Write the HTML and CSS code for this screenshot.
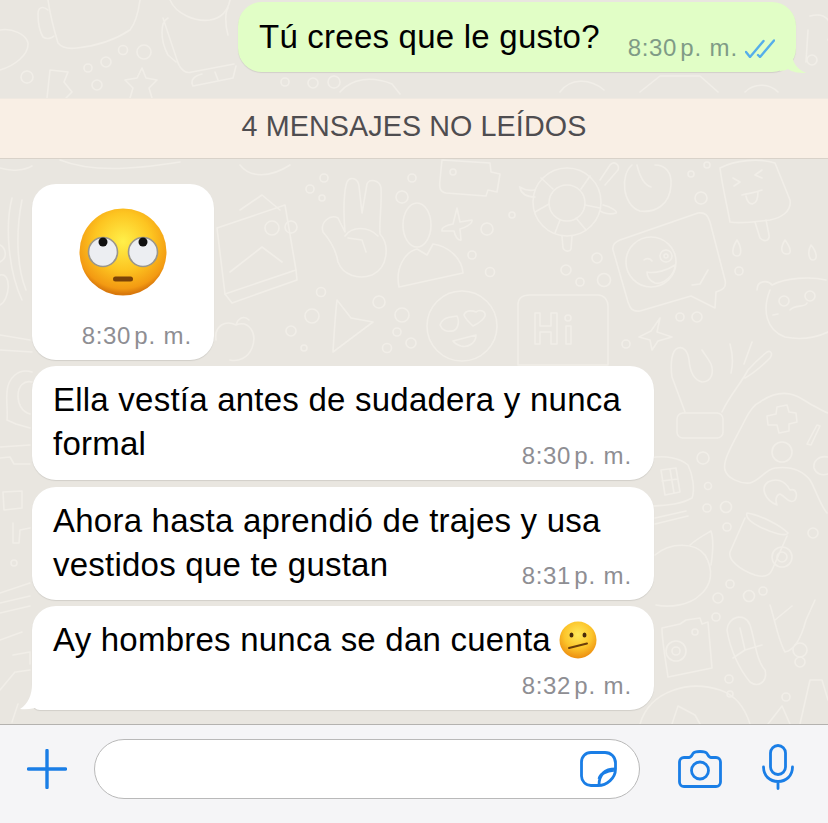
FILE: index.html
```html
<!DOCTYPE html>
<html lang="es">
<head>
    <meta charset="UTF-8">
    <meta name="viewport" content="width=device-width, initial-scale=1.0">
    <title>Chat</title>
    <link rel="stylesheet" href="styles.css">
</head>
<body>
    <div class="chat">
        <!-- Wallpaper doodles -->
        <svg class="wallpaper" viewBox="0 0 828 724" width="828" height="724" aria-hidden="true">
            <g fill="none" stroke="#f1eee8" stroke-width="1.6" stroke-linecap="round" stroke-linejoin="round">
                <!-- small bubbles -->
                <circle cx="324" cy="178" r="4"/><circle cx="310" cy="189" r="4"/><circle cx="322" cy="198" r="3"/>
                <circle cx="402" cy="197" r="6"/><circle cx="412" cy="178" r="4"/><circle cx="487" cy="229" r="6"/>
                <circle cx="512" cy="215" r="3"/><circle cx="472" cy="255" r="4"/><circle cx="490" cy="272" r="4.5"/>
                <circle cx="597" cy="258" r="5"/><circle cx="566" cy="270" r="5"/><circle cx="580" cy="282" r="4"/>
                <circle cx="604" cy="280" r="6.5"/><circle cx="321" cy="292" r="4.5"/><circle cx="379" cy="302" r="6"/>
                <circle cx="312" cy="316" r="7"/><circle cx="402" cy="315" r="7"/><circle cx="397" cy="332" r="4"/>
                <circle cx="411" cy="343" r="5"/><circle cx="387" cy="348" r="4.5"/><circle cx="304" cy="348" r="3"/>
                <circle cx="701" cy="198" r="6"/><circle cx="691" cy="174" r="3"/><circle cx="707" cy="165" r="3"/>
                <circle cx="739" cy="271" r="4"/><circle cx="680" cy="317" r="4"/><circle cx="697" cy="317" r="5"/>
                <circle cx="626" cy="344" r="4"/><circle cx="291" cy="227" r="6"/>
                <circle cx="703" cy="458" r="6"/><circle cx="708" cy="486" r="3.5"/><circle cx="707" cy="508" r="4"/>
                <circle cx="726" cy="507" r="5.5"/><circle cx="727" cy="527" r="4"/><circle cx="813" cy="533" r="5"/>
                <circle cx="730" cy="584" r="4"/><circle cx="718" cy="598" r="5"/><circle cx="749" cy="596" r="5.5"/>
                <circle cx="763" cy="591" r="4"/><circle cx="716" cy="617" r="4"/>
                <circle cx="800" cy="650" r="7"/><circle cx="800" cy="662" r="5"/><circle cx="729" cy="679" r="4"/>
                <circle cx="786" cy="697" r="4"/><circle cx="730" cy="694" r="3"/><circle cx="14" cy="563" r="3"/>
                <circle cx="27" cy="77" r="6"/><circle cx="88" cy="68" r="4"/><circle cx="106" cy="62" r="5"/>
                <circle cx="97" cy="85" r="5"/><circle cx="123" cy="50" r="4.5"/><circle cx="144" cy="52" r="7"/>
                <circle cx="285" cy="82" r="4"/><circle cx="313" cy="83" r="5"/><circle cx="334" cy="82" r="6"/>
                <circle cx="812" cy="60" r="5"/>

                <!-- peace hand -->
                <path d="M345 232 C343 210 344 190 347 182 C350 176 358 178 359 186 L362 213 L367 184 C369 178 380 180 381 188 C382 205 379 222 380 234 C390 245 388 268 372 275 C358 280 343 275 338 262 C336 250 330 240 323 232 C320 222 330 214 338 218 L345 232"/>
                <path d="M345 236 C352 226 368 226 378 236 M348 238 L362 240 L366 252"/>

                <!-- person -->
                <ellipse cx="417" cy="225" rx="14" ry="22"/>
                <path d="M399 287 C395 268 405 252 417 249 L427 255 L433 244 C448 246 462 258 463 273 Z"/>
                <path d="M457 208 L460 222 L472 220 C473 224 464 228 460 229 L461 240 C458 241 455 236 454 231 L442 231 C441 227 448 225 453 224 Z"/>

                <!-- camera top, turtle -->
                <path d="M442 160 L490 163 L491 172 L500 174 L497 192 L488 190 L486 196 L446 193 C440 192 439 188 440 180 Z"/>
                <circle cx="453" cy="172" r="3"/>
                <circle cx="567" cy="202" r="34"/><circle cx="567" cy="203" r="18"/>
                <path d="M553 189 L541 178 M581 189 L590 176 M585 205 L600 208 M576 218 L586 230 M560 220 L555 233 M549 204 L535 212"/>
                <path d="M535 190 C522 192 518 184 520 188 C522 196 530 197 535 197 M562 236 L563 248 C565 252 570 252 571 249 L572 236 M603 205 C612 207 618 212 616 213 C610 215 603 213 600 211 M600 180 L610 165 C614 160 620 165 618 170 L605 185"/>

                <!-- apple -->
                <path d="M632 165 C620 175 622 205 640 211 C655 213 670 205 671 185 C672 172 665 165 655 165 M637 165 C640 178 645 185 651 187"/>

                <!-- popsicle -->
                <path d="M720 168 C735 160 760 158 775 163 L790 200 C792 212 780 218 770 220 C755 222 740 224 730 222 C727 205 722 185 720 168 Z"/>
                <path d="M755 222 L760 238 C765 243 770 240 769 235 L766 220 M733 178 L740 182 L734 186 M762 170 L755 175 L762 178 M742 195 C750 193 755 193 762 190 M746 196 C748 208 758 206 758 192"/>

                <!-- wink emoji speech square -->
                <path d="M620 240 L698 213 C706 212 708 216 710 222 L725 280 C727 288 722 290 716 292 L715 308 L691 296 L640 311 C632 312 630 308 628 302 L613 250 C612 245 615 242 620 240 Z"/>
                <circle cx="651" cy="262" r="25"/><circle cx="666" cy="256" r="6"/><circle cx="666" cy="256" r="2"/>
                <path d="M644 260 C646 258 650 258 652 261 M647 272 C655 274 668 270 675 265 C675 276 662 285 655 283 C650 281 647 277 647 272 M692 285 L700 284 L708 270"/>

                <!-- arrow, heart eyes, Hi -->
                <path d="M337 300 L351 318 L373 322 L333 352 C334 335 335 318 337 300 Z"/>
                <circle cx="462" cy="326" r="35"/>
                <path d="M440 325 C443 316 452 317 457 316 C460 322 458 332 450 331 C447 332 442 330 440 325 Z M464 315 C466 309 474 311 476 312 C480 309 486 311 485 316 C483 321 477 324 473 326 C470 323 466 320 464 315 Z M453 341 L476 335 C476 343 468 348 461 346 C458 345 455 344 453 341 Z"/>
                <path d="M518 305 C518 298 522 295 530 295 L598 295 C604 295 608 300 608 306 L608 365 L518 365 Z"/>
                <path d="M535 313 V344 H540 V332 H551 V344 H557 V313 H551 V326 H540 V313 Z M566 326 H571 V344 H566 Z"/>
                <circle cx="568" cy="318" r="3"/>

                <!-- star low -->
                <path d="M660 318 L657 332 L672 337 L658 341 L652 350 L650 340 L639 337 L651 331 Z"/>

                <!-- ok hand -->
                <rect x="677" y="413" width="46" height="25" rx="6"/>
                <path d="M685 412 L672 377 C670 362 672 350 678 348 C684 346 688 352 689 360 C690 372 694 380 702 382 C712 382 714 372 711 364 C708 358 705 355 702 350 M722 412 C730 395 740 385 748 370 C755 362 762 356 767 352 C771 350 773 354 770 358 C762 366 752 374 745 378 M730 344 C733 355 733 365 731 373 M752 342 L744 364"/>

                <!-- gamepad -->
                <path d="M725 470 C722 460 735 440 745 420 C750 410 755 404 760 402 C770 395 780 392 790 394 C800 396 806 402 812 405 C818 408 824 412 828 413"/>
                <path d="M725 470 C727 478 740 484 750 483 C760 480 765 470 775 468 C790 466 802 470 810 480 C816 490 820 505 827 513"/>
                <path d="M777 407 L787 405 L789 412 L796 413 L797 422 L789 424 L789 431 L779 433 L777 425 L768 425 L767 416 L776 414 Z"/>
                <circle cx="782" cy="452" r="10"/>
                <path d="M817 425 L807 444 L811 445 L820 426 Z"/>
                <path d="M828 457 C818 455 813 462 814 468 C816 474 822 476 828 474"/>
                <path d="M777 505 C765 500 760 488 768 482 C776 478 785 480 790 490 C796 488 798 495 795 500 C790 505 785 496 780 494 C776 495 775 500 777 505 Z"/>

                <!-- mug -->
                <path d="M747 513 C760 515 780 525 788 533 C786 537 772 533 760 527 C752 523 745 518 747 513 Z"/>
                <path d="M745 518 L730 552 C728 560 740 570 755 575 C765 578 770 575 772 570 L787 536"/>
                <circle cx="782" cy="557" r="10"/><circle cx="782" cy="557" r="5"/>

                <!-- alarm clock -->
                <path d="M650 458 C665 455 680 458 688 465 C693 475 695 490 692 498 C680 505 665 505 654 506"/>
                <path d="M661 470 L676 468 L680 492 L665 495 Z M662 481 L678 479 M670 469 L674 493"/>
                <path d="M655 518 L686 511 M655 524 L688 516"/>

                <!-- shell -->
                <path d="M655 555 C670 542 695 542 705 555 C714 570 712 585 700 595 C690 605 670 608 656 605"/>
                <path d="M690 545 C698 538 706 534 711 531 C714 540 713 552 711 565"/>

                <!-- camera and flip flops, bottom right -->
                <path d="M662 628 L680 624 L686 620 L700 618 L702 624 L708 622 L712 668 L668 677 C664 650 662 640 662 628 Z"/>
                <circle cx="676" cy="651" r="10"/><circle cx="676" cy="651" r="4"/>
                <circle cx="695" cy="632" r="3"/>
                <path d="M727 630 C728 616 745 612 750 625 C755 640 756 660 765 670 C768 682 758 688 750 682 C740 670 730 650 727 630 Z M740 628 L745 650 L733 658 M745 650 L762 645"/>
                <path d="M770 605 C775 620 778 640 785 652 C795 650 802 635 806 620 L815 600 M775 620 L792 606"/>

                <!-- drops -->
                <path d="M737 240 C732 248 731 256 737 256 C742 256 742 248 737 240 Z M785 240 C780 248 781 254 787 254 C792 254 791 248 785 240 Z M811 245 C807 252 809 260 813 260 C818 260 817 252 811 245 Z"/>

                <!-- bear -->
                <path d="M757 290 C757 280 768 280 772 285 C785 278 810 276 826 280 M770 290 C762 310 766 330 785 337 C800 340 815 338 828 332"/>
                <circle cx="784" cy="301" r="5"/><circle cx="810" cy="296" r="5"/>
                <path d="M790 310 C795 304 805 308 807 303 M773 315 L778 314"/>

                <!-- photos, left -->
                <path d="M217 228 L285 205 L296 270 L225 294 Z"/>
                <path d="M225 294 L232 303 L297 280 L296 270 M230 272 L262 247 L282 262 M240 210 L262 195 L280 210"/>
                <circle cx="272" cy="228" r="7"/>
                <path d="M216 340 C214 325 226 320 236 325 C248 320 258 332 252 348 C248 358 238 362 230 360 M236 325 C238 318 244 315 249 320"/>
                <circle cx="291" cy="331" r="5"/>

                <!-- left edge doodles -->
                <path d="M12 198 C5 225 8 270 22 300 M22 200 C16 230 16 265 26 290 M0 245 C6 248 8 258 0 262 M0 275 C12 272 10 300 0 305"/>
                <path d="M0 335 L30 340 M0 350 L32 352 M0 168 C12 172 25 170 32 166"/>
                <path d="M32 372 C18 368 8 378 7 392 C6 402 8 412 7 420 L16 424 L30 428 M32 382 C24 380 18 386 18 396 C18 404 22 412 30 414"/>
                <path d="M0 447 L30 445 M0 458 L10 457 L14 464 L30 464"/>
                <path d="M3 492 L22 491 L22 508 L4 510 Z M13 523 L13 543 L19 543 L20 530 L30 528"/>
                <path d="M0 593 L30 583 M0 603 L30 596 M0 613 L30 606"/>
                <path d="M0 640 L22 632 M13 655 L30 652 L30 664 M16 672 L30 670"/>
                <path d="M0 690 L15 672 M12 722 L18 704"/>

                <!-- top left -->
                <path d="M48 0 C50 14 54 30 58 43 C62 48 70 49 77 48 C95 46 115 40 130 30 C134 25 138 15 140 0"/>
                <path d="M48 10 C42 5 38 8 38 14 C38 24 40 32 43 37 C47 40 52 38 54 36"/>
                <path d="M0 30 C12 28 26 34 28 43 C29 55 14 66 0 70"/>
                <path d="M50 70 L68 72 L64 82 L72 92 L66 98 M50 70 L47 98"/>
                <path d="M142 68 L146 78 L157 80 L149 88 L152 98 M142 68 L137 78 L125 80 L133 88 L130 98"/>
                <path d="M170 0 C176 14 195 22 210 20 C222 18 228 10 230 0"/>
                <path d="M168 18 C160 22 160 40 168 55 L176 62 M163 18 L177 60 C180 70 186 74 192 72 L234 64"/>
                <path d="M193 86 L233 78 L236 66 M193 86 C190 80 194 76 202 74 M215 72 L218 80"/>
                <path d="M228 8 C225 12 225 25 228 35"/>

                <!-- top middle and right -->
                <path d="M60 160 C90 172 130 170 180 162 M240 165 C250 178 270 178 290 165"/>
                <path d="M340 92 C352 78 372 76 392 84 L400 94 M560 92 C570 78 590 78 604 90 M640 92 L660 76 L700 76 L718 92 M745 92 C755 82 770 84 778 92"/>
                <path d="M810 16 C825 12 835 20 828 40 M808 30 L806 62"/>

                <!-- under the last bubble -->
                <path d="M640 724 C650 690 690 680 720 690 C735 695 745 708 750 724 M672 724 L678 706 L695 715 L700 724"/>
                <path d="M768 724 L782 706 L790 724 M800 724 L810 680 L822 680 L828 700"/>
            </g>
        </svg>

        <div class="row row-out">
            <div class="bubble bubble-out">
                <span class="text">Tú crees que le gusto?</span>
                <span class="meta meta-out">
                    <span class="time">8:30</span><span class="ampm">p. m.</span>
                    <svg class="ticks" viewBox="0 0 30 19" width="30" height="19" fill="none" stroke="#55aeea" stroke-width="2.4" stroke-linecap="round" stroke-linejoin="round">
                        <path d="M1 13 L5 18 L18.5 2"/>
                        <path d="M13 16 L15 18 L29 1.5"/>
                    </svg>
                </span>
                <svg class="tail tail-out" viewBox="0 0 26 20" width="26" height="20"><path d="M0 0 L12 0 C12 8 16 16 26 20 C18 20 12 19 8 16 C6 17 3 18 0 18 Z" fill="#e1fec6"/></svg>
            </div>
        </div>

        <div class="unread">4 MENSAJES NO LEÍDOS</div>

        <div class="messages">
            <div class="bubble bubble-emoji">
                <svg class="big-emoji" viewBox="0 0 90 90" width="90" height="90">
                    <defs>
                        <radialGradient id="faceBig" cx="50%" cy="38%" r="60%">
                            <stop offset="0" stop-color="#fff04a"/>
                            <stop offset="0.55" stop-color="#fdc521"/>
                            <stop offset="0.9" stop-color="#f39a12"/>
                            <stop offset="1" stop-color="#d9790c"/>
                        </radialGradient>
                    </defs>
                    <circle cx="45" cy="45" r="43.5" fill="url(#faceBig)"/>
                    <circle cx="25" cy="45" r="14.5" fill="#eceef2" stroke="#9a968c" stroke-width="1.6"/>
                    <circle cx="65" cy="45" r="14.5" fill="#eceef2" stroke="#9a968c" stroke-width="1.6"/>
                    <circle cx="25" cy="35" r="4.5" fill="#111"/>
                    <circle cx="65" cy="35" r="4.5" fill="#111"/>
                    <rect x="35" y="69.5" width="20" height="5" rx="2.5" fill="#7a4208"/>
                </svg>
                <span class="meta"><span class="time">8:30</span><span class="ampm">p. m.</span></span>
            </div>

            <div class="bubble bubble-text bubble-two">
                <span class="text">Ella vestía antes de sudadera y nunca<br>formal</span>
                <span class="meta"><span class="time">8:30</span><span class="ampm">p. m.</span></span>
            </div>

            <div class="bubble bubble-text bubble-three">
                <span class="text">Ahora hasta aprendió de trajes y usa<br>vestidos que te gustan</span>
                <span class="meta"><span class="time">8:31</span><span class="ampm">p. m.</span></span>
            </div>

            <div class="bubble bubble-text bubble-last">
                <span class="text text-emoji">Ay hombres nunca se dan cuenta<svg class="small-emoji" viewBox="0 0 38 38" width="38" height="38">
                    <defs>
                        <radialGradient id="faceSmall" cx="50%" cy="35%" r="62%">
                            <stop offset="0" stop-color="#ffe95a"/>
                            <stop offset="0.6" stop-color="#fcc52b"/>
                            <stop offset="1" stop-color="#ee9313"/>
                        </radialGradient>
                    </defs>
                    <circle cx="19" cy="19" r="18.5" fill="url(#faceSmall)"/>
                    <ellipse cx="12.5" cy="14" rx="2" ry="2.6" fill="#4a2c0a"/>
                    <ellipse cx="25.5" cy="14" rx="2" ry="2.6" fill="#4a2c0a"/>
                    <path d="M10 27 L28 22.5" stroke="#6a3d0a" stroke-width="2" stroke-linecap="round"/>
                </svg></span>
                <span class="meta"><span class="time">8:32</span><span class="ampm">p. m.</span></span>
                <svg class="tail tail-in" viewBox="0 0 24 26" width="24" height="26"><path d="M12 0 C12 11 8 20 0 25 C6 26 16 25 22 21 L24 22 L24 0 Z" fill="#fff"/></svg>
            </div>
        </div>
    </div>

    <div class="composer">
        <svg class="icon icon-plus" viewBox="0 0 40 40" width="40" height="40" fill="none" stroke="#1a7ee6" stroke-width="3.4" stroke-linecap="round">
            <path d="M20 1.5 V38.5 M1.5 20 H38.5"/>
        </svg>
        <div class="input">
            <svg class="icon" viewBox="0 0 37 36" width="37" height="36" fill="none" stroke="#1a7ee6" stroke-width="2.8" stroke-linejoin="round">
                <path d="M11 1.5 H25 C31 1.5 35.5 6 35.5 12 V18 C35.5 27 27 34.5 18 34.5 H11 C5.5 34.5 1.5 30 1.5 25 V11 C1.5 5.5 5.5 1.5 11 1.5 Z"/>
                <path d="M35.5 18 C28 18 19 20 19 34.2 M19 28 C20 22 26 20 35 19"/>
            </svg>
        </div>
        <svg class="icon icon-camera" viewBox="0 0 44 38" width="44" height="38" fill="none" stroke="#1a7ee6" stroke-width="2.8" stroke-linejoin="round">
            <path d="M6 7.5 H11 C13 7.5 14 5 15 3.5 C16 2 18 1.5 22 1.5 C26 1.5 28 2 29 3.5 C30 5 31 7.5 33 7.5 H38 C40.5 7.5 42.5 9.5 42.5 12 V32 C42.5 34.5 40.5 36.5 38 36.5 H6 C3.5 36.5 1.5 34.5 1.5 32 V12 C1.5 9.5 3.5 7.5 6 7.5 Z"/>
            <circle cx="22" cy="20.5" r="8.5"/>
        </svg>
        <svg class="icon icon-mic" viewBox="0 0 32 46" width="32" height="46" fill="none" stroke="#1a7ee6" stroke-width="2.8" stroke-linecap="round">
            <rect x="8.5" y="1.5" width="15" height="29" rx="7.5"/>
            <path d="M1.5 23 C1.5 32 8 37.5 16 37.5 C24 37.5 30.5 32 30.5 23 M16 37.5 V44.5"/>
        </svg>
    </div>
</body>
</html>
```

FILE: styles.css
```css
* {
    margin: 0;
    padding: 0;
    box-sizing: border-box;
}

html, body {
    width: 828px;
    height: 823px;
    overflow: hidden;
}

body {
    font-family: "Liberation Sans", Arial, sans-serif;
    background-color: #f5f5f7;
    color: #000;
}

/* Chat area */
.chat {
    height: 724px;
    background-color: #e9e6e0;
    position: relative;
    display: flex;
    flex-direction: column;
    padding-top: 2px;
}

.wallpaper {
    position: absolute;
    top: 0;
    left: 0;
}

.row,
.unread,
.messages {
    position: relative;
}

.row-out {
    display: flex;
    justify-content: flex-end;
    padding-right: 32px;
}

.bubble {
    position: relative;
    background: #fff;
    border-radius: 24px;
    box-shadow: 0 1px 1px rgba(0, 0, 0, 0.1);
}

.bubble-out {
    width: 558px;
    height: 70px;
    background: #e1fec6;
    display: flex;
    justify-content: space-between;
    padding: 13px 21px 0 21px;
}

.text {
    font-size: 33px;
    line-height: 43.5px;
    letter-spacing: 0.23px;
}

.meta {
    font-size: 24px;
    color: #8e8e93;
    display: flex;
    align-items: center;
    white-space: nowrap;
    letter-spacing: 0.7px;
    justify-self: end;
    align-self: end;
}

.ampm {
    margin-left: 3px;
    letter-spacing: 0.9px;
}

.meta-out {
    color: #7f9b86;
    align-self: flex-end;
    margin-bottom: 11px;
    height: 26px;
}

.ticks {
    margin-left: 7px;
}

.tail {
    position: absolute;
}

.tail-out {
    right: -10px;
    bottom: -1px;
}

.tail-in {
    left: -12px;
    bottom: 0;
}

/* Unread banner */
.unread {
    margin-top: 26px;
    height: 61px;
    background: #f9efe5;
    border-top: 1px solid #efe9e1;
    border-bottom: 1px solid #d9d2c9;
    font-size: 28.7px;
    color: #4f4d50;
    display: flex;
    align-items: center;
    justify-content: center;
    letter-spacing: 0.1px;
    padding-bottom: 4px;
}

/* Incoming messages */
.messages {
    margin-top: 25px;
    padding-left: 32px;
    display: flex;
    flex-direction: column;
}

.bubble-emoji {
    width: 182px;
    height: 176px;
    display: flex;
    flex-direction: column;
    align-items: center;
    padding-top: 23px;
}

.big-emoji {
    flex: none;
}

.bubble-emoji .meta {
    align-self: flex-end;
    margin: 25px 22px 0 0;
}

.bubble-text {
    width: 622px;
    display: grid;
    padding: 12px 22px 10px 21px;
}

.bubble-text .text,
.bubble-text .meta {
    grid-area: 1 / 1;
}

.bubble-two {
    height: 114px;
    margin-top: 6px;
}

.bubble-three {
    height: 113px;
    margin-top: 7px;
}

.bubble-last {
    height: 104px;
    margin-top: 6px;
    border-bottom-left-radius: 8px;
}

.text-emoji {
    display: flex;
    align-items: center;
    height: 44px;
}

.small-emoji {
    margin-left: 8px;
    flex: none;
}

/* Bottom input bar */
.composer {
    height: 99px;
    border-top: 1px solid #b4b2af;
    background: #f5f5f7;
    display: flex;
    align-items: center;
    padding: 0 34px 10px 27px;
}

.icon {
    flex: none;
}

.input {
    width: 546px;
    height: 60px;
    margin-left: 27px;
    background: #fff;
    border: 1px solid #b9b9b9;
    border-radius: 30px;
    display: flex;
    align-items: center;
    justify-content: flex-end;
    padding-right: 22px;
}

.icon-camera {
    margin-left: 38px;
}

.icon-mic {
    margin-left: 40px;
    margin-top: -4px;
}
```
